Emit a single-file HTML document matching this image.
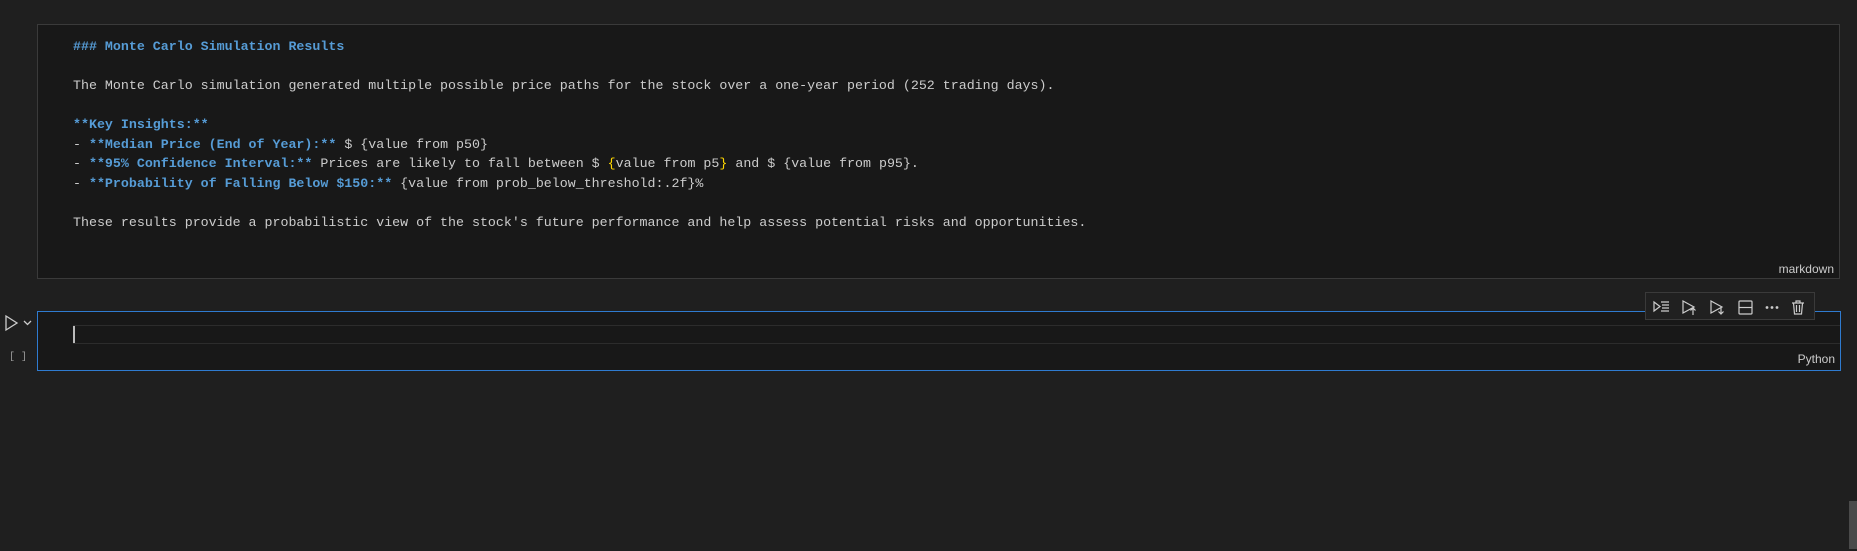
<!DOCTYPE html>
<html><head><style>
body{margin:0;width:1857px;height:551px;background:#1f1f1f;position:relative;overflow:hidden;font-family:"Liberation Mono",monospace;}
.md{position:absolute;left:37px;top:24px;width:1803px;height:255px;border:1px solid #3a3a3a;background:#181818;box-sizing:border-box;}
.ln{position:absolute;left:35px;font-size:13.3px;color:#cccccc;white-space:pre;line-height:18px;}
.b{color:#569cd6;font-weight:bold}
.y{color:#ffd700}
.lab{position:absolute;font-family:"Liberation Sans",sans-serif;font-size:12px;color:#cccccc;}
.code{position:absolute;left:37px;top:311px;width:1804px;height:60px;border:1px solid #2f7bd0;background:#181818;box-sizing:border-box;}
.ed{position:absolute;left:35px;top:13px;right:0;height:17px;border-top:1px solid #2c2c2c;border-bottom:1px solid #2c2c2c;}
.cur{position:absolute;left:0;top:0;width:2px;height:17px;background:#bbb;}
.tb{position:absolute;left:1645px;top:292px;width:170px;height:28px;background:#202020;border:1px solid #3a3a3a;box-sizing:border-box;}
.sb{position:absolute;left:1849px;top:501px;width:8px;height:48px;background:#4a4a4a;}
</style></head><body>
<div class="md">
<div class="ln b" style="top:13px">### Monte Carlo Simulation Results</div>
<div class="ln" style="top:52px">The Monte Carlo simulation generated multiple possible price paths for the stock over a one-year period (252 trading days).</div>
<div class="ln b" style="top:91px">**Key Insights:**</div>
<div class="ln" style="top:111px">- <span class="b">**Median Price (End of Year):**</span> $ {value from p50}</div>
<div class="ln" style="top:130px">- <span class="b">**95% Confidence Interval:**</span> Prices are likely to fall between $ <span class="y">{</span>value from p5<span class="y">}</span> and $ {value from p95}.</div>
<div class="ln" style="top:150px">- <span class="b">**Probability of Falling Below $150:**</span> {value from prob_below_threshold:.2f}%</div>
<div class="ln" style="top:189px">These results provide a probabilistic view of the stock's future performance and help assess potential risks and opportunities.</div>
<div class="lab" style="right:5px;top:237px">markdown</div>
</div>
<svg style="position:absolute;left:3px;top:314px" width="32" height="18" viewBox="0 0 32 18" fill="none" stroke="#cccccc" stroke-width="1.3"><path d="M3 2 L14 9 L3 16 Z"/><path d="M21 7 L24.5 10.5 L28 7"/></svg>
<div style="position:absolute;left:9px;top:352px;font-size:10px;color:#999;font-family:'Liberation Mono',monospace">[ ]</div>
<div class="code">
<div class="ed"><div class="cur"></div></div>
<div class="lab" style="right:5px;top:40px">Python</div>
</div>
<div class="tb">
<svg width="170" height="28" viewBox="0 0 170 28" fill="none" stroke="#cccccc" stroke-width="1.2">
<path d="M8 9 L14 13.5 L8 18 Z"/><path d="M15 9h8M16 12h7M16 15h7M15 18h8"/>
<path d="M37 8 L48 14 L37 20 Z"/><path d="M47 22v-7M44.5 17.5 L47 15 L49.5 17.5"/>
<path d="M65 8 L76 14 L65 20 Z"/><path d="M75 14v7M72.5 18.5 L75 21 L77.5 18.5"/>
<rect x="93" y="8" width="13" height="13" rx="1"/><path d="M93 14.5h13"/>
<circle cx="121" cy="14.5" r="0.8" fill="#ccc"/><circle cx="126" cy="14.5" r="0.8" fill="#ccc"/><circle cx="131" cy="14.5" r="0.8" fill="#ccc"/>
<path d="M146 10h12M150 10V8h4v2M147.5 10l1 11h7l1-11M150.5 12v7M153.5 12v7"/>
</svg>
</div>
<div class="sb"></div>
</body></html>
